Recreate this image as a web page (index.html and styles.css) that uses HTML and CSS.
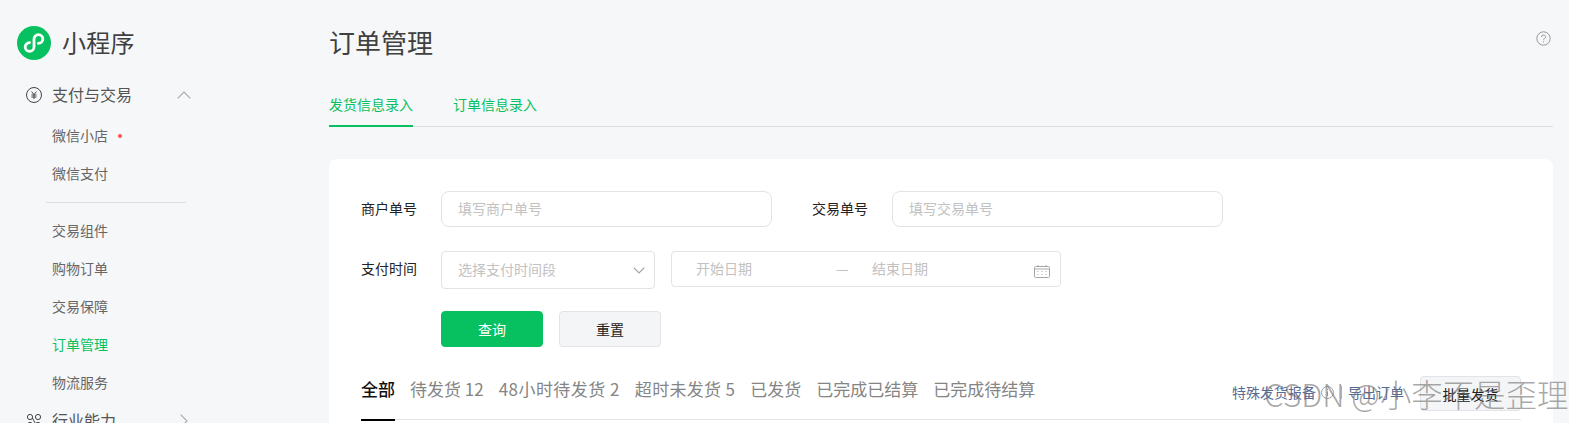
FILE: index.html
```html
<!DOCTYPE html>
<html lang="zh-CN">
<head>
<meta charset="utf-8">
<title>订单管理</title>
<link rel="stylesheet" href="styles.css">
</head>
<body>
<div class="page">
  <aside class="sidebar">
    <div class="brand">
      <svg class="brand-logo" width="34" height="34" viewBox="0 0 34 34"><circle cx="17" cy="17" r="17" fill="#07c160"/><path d="M12.6 16.6A4.4 4.4 0 1 0 17 21V13A4.4 4.4 0 1 1 21.4 17.4" fill="none" stroke="#fff" stroke-width="2.8" stroke-linecap="round"/></svg>
      <span class="brand-name">小程序</span>
    </div>
    <div class="nav-head">
      <svg class="nav-icon" width="16" height="16" viewBox="0 0 16 16" fill="none" stroke="#444" stroke-width="1"><circle cx="8" cy="8" r="7.5"/><path d="M5.6 4.6 8 7.6l2.4-3M5.4 8h5.2M5.4 10h5.2M8 7.6V12"/></svg>
      <span class="nav-title">支付与交易</span>
      <svg class="nav-chevron" width="14" height="8" viewBox="0 0 14 8" fill="none" stroke="#a8a8a8" stroke-width="1.1"><path d="M.7 7.3 7 1l6.3 6.3"/></svg>
    </div>
    <ul class="nav-list first">
      <li class="nav-item">微信小店<span class="dot"></span></li>
      <li class="nav-item">微信支付</li>
    </ul>
    <div class="nav-divider"></div>
    <ul class="nav-list">
      <li class="nav-item">交易组件</li>
      <li class="nav-item">购物订单</li>
      <li class="nav-item">交易保障</li>
      <li class="nav-item active">订单管理</li>
      <li class="nav-item">物流服务</li>
    </ul>
    <div class="nav-head">
      <svg class="nav-icon" width="16" height="16" viewBox="0 0 16 16" fill="none" stroke="#444" stroke-width="1"><circle cx="4" cy="4" r="2.6"/><circle cx="12" cy="4" r="2.6"/><circle cx="4" cy="12" r="2.6"/><circle cx="12" cy="12" r="2.6"/><path d="M6.4 5 9.6 11"/></svg>
      <span class="nav-title">行业能力</span>
      <svg class="nav-chevron right" width="8" height="14" viewBox="0 0 8 14" fill="none" stroke="#a8a8a8" stroke-width="1.1"><path d="M.7.7 7 7 .7 13.3"/></svg>
    </div>
  </aside>
  <main class="main">
    <header class="page-head">
      <h1 class="page-title">订单管理</h1>
      <svg class="help" width="15" height="15" viewBox="0 0 15 15" fill="none" stroke="#999"><circle cx="7.5" cy="7.5" r="6.7"/><path d="M5.5 6a2 2 0 1 1 3 1.7c-.7.4-1 .8-1 1.5"/><path d="M7.5 10.4v1.1"/></svg>
    </header>
    <nav class="top-tabs">
      <a class="top-tab active">发货信息录入</a>
      <a class="top-tab">订单信息录入</a>
    </nav>
    <section class="card">
      <div class="form-row">
        <label class="form-label">商户单号</label>
        <div class="field wide">填写商户单号</div>
        <label class="form-label second">交易单号</label>
        <div class="field wide">填写交易单号</div>
      </div>
      <div class="form-row row-time">
        <label class="form-label">支付时间</label>
        <div class="field select">选择支付时间段
          <svg width="12" height="7" viewBox="0 0 12 7" fill="none" stroke="#a0a0a0" stroke-width="1.1"><path d="M.7.7 6 6 11.3.7"/></svg>
        </div>
        <div class="field date">
          <span class="date-start">开始日期</span>
          <span class="date-sep">—</span>
          <span class="date-end">结束日期</span>
          <svg class="cal" width="16" height="13" viewBox="0 0 16 13" fill="none" stroke="#a8a8a8"><rect x=".5" y="1.5" width="15" height="11" rx="1"/><path d="M.5 4h15M4 0v2M12 0v2"/><path d="M3.5 6.5h1M7.5 6.5h1M11.5 6.5h1M3.5 9.5h1M7.5 9.5h1M11.5 9.5h1"/></svg>
        </div>
      </div>
      <div class="form-actions">
        <button class="btn primary">查询</button>
        <button class="btn">重置</button>
      </div>
      <div class="order-bar">
        <div class="order-tabs">
          <a class="order-tab active">全部</a>
          <a class="order-tab">待发货 12</a>
          <a class="order-tab wider">48小时待发货 2</a>
          <a class="order-tab wide-some">超时未发货 5</a>
          <a class="order-tab">已发货</a>
          <a class="order-tab">已完成已结算</a>
          <a class="order-tab">已完成待结算</a>
        </div>
        <div class="order-tools">
          <a class="tool-link">特殊发货报备</a>
          <svg class="info" width="13" height="13" viewBox="0 0 13 13" fill="none" stroke="#a0a0a0"><circle cx="6.5" cy="6.5" r="6"/><path d="M6.5 3v1M6.5 5.5V10"/></svg>
          <span class="tool-sep"></span>
          <a class="tool-link">导出订单</a>
          <button class="btn batch">批量发货</button>
        </div>
      </div>
    </section>
  </main>
  <div class="watermark">CSDN @小李不是歪理</div>
</div>
</body>
</html>
```
FILE: styles.css
```css
* { box-sizing: border-box; }
html, body { margin: 0; padding: 0; }
body {
  background: #f6f7f9;
  font-family: "Noto Sans CJK SC", "Noto Sans", sans-serif;
  color: #333;
}
.page {
  position: relative;
  display: flex;
  width: 1569px;
  height: 423px;
  overflow: hidden;
}
.sidebar { width: 329px; flex: none; padding-top: 26px; }
.brand { display: flex; align-items: center; height: 34px; padding-left: 17px; margin-bottom: 16px; }
.brand-name { margin-left: 11px; margin-bottom: 2px; font-size: 24px; letter-spacing: .3px; line-height: 32px; color: #404040; }
.nav-head { display: flex; align-items: center; height: 38px; padding-left: 26px; }
.nav-icon { flex: none; }
.nav-title { margin-left: 10px; margin-bottom: 2px; font-size: 16px; color: #555; line-height: 36px; }
.nav-chevron { margin-left: 45px; }
.nav-chevron.right { margin-left: 64px; }
.nav-list { list-style: none; margin: 0; padding: 0; }
.nav-list.first { margin-top: 3px; }
.nav-item { display: flex; align-items: center; height: 38px; padding: 0 0 2px 52px; font-size: 14px; color: #666; }
.nav-item.active { color: #07c160; }
.dot { width: 4px; height: 4px; margin: 2px 0 0 10px; border-radius: 50%; background: #fa5151; }
.nav-divider { width: 140px; height: 1px; margin: 9px 0 9px 46px; background: #dcdee3; }

.main { width: 1224px; flex: none; }
.page-head { display: flex; align-items: center; justify-content: space-between; height: 36px; margin-top: 25px; }
.page-title { margin: 0 0 2px; font-size: 26px; font-weight: 400; line-height: 34px; color: #404040; }
.help { margin-right: 2px; margin-top: -9px; }
.top-tabs { display: flex; gap: 40px; height: 44px; margin-top: 22px; border-bottom: 1px solid #dcdee3; }
.top-tab { display: flex; align-items: center; height: 44px; padding-bottom: 2px; font-size: 14px; color: #07c160; }
.top-tab.active { padding-bottom: 0; border-bottom: 2px solid #07c160; }

.card { margin-top: 32px; padding: 32px 32px 0; height: 300px; background: #fff; border-radius: 8px 8px 0 0; }
.form-row { display: flex; align-items: flex-start; }
.row-time { margin-top: 24px; }
.form-label { width: 80px; flex: none; font-size: 14px; line-height: 34px; color: #222; }
.form-label.second { margin-left: 40px; }
.field {
  display: flex; align-items: center;
  border: 1px solid #e2e3e6; background: #fff;
  font-size: 14px; color: #c2c2c2;
  padding: 0 0 2px 16px;
}
.wide { width: 331px; height: 36px; border-radius: 8px; }
.select { width: 214px; height: 38px; border-radius: 4px; justify-content: space-between; padding-right: 9px; }
.select svg { margin-top: 2px; }
.date { position: relative; width: 390px; height: 36px; margin-left: 16px; border-radius: 4px; padding-left: 24px; }
.date-start { width: 140px; }
.date-sep { width: 36px; }
.date-end { width: 56px; }
.cal { margin-left: auto; margin-right: 10px; margin-top: 6px; }
.form-actions { display: flex; gap: 16px; margin-top: 22px; margin-left: 80px; }
.btn {
  display: block; width: 102px; height: 36px; padding: 0;
  border: 1px solid #e2e3e6; border-radius: 4px; background: #f4f5f7;
  font: 14px "Noto Sans CJK SC", sans-serif; color: #222;
}
.btn.primary { border-color: #07c160; background: #07c160; color: #fff; }
.order-bar { position: relative; display: flex; justify-content: space-between; height: 73px; border-bottom: 1px solid #e4e5e8; }
.order-tabs { display: flex; gap: 15px; padding-top: 29px; }
.order-tab { position: relative; height: 44px; font-size: 17px; line-height: 26px; color: #858585; white-space: nowrap; }
.order-tab.wider { letter-spacing: .45px; }
.order-tab.wide-some { letter-spacing: .3px; }
.order-tab.active { color: #111; font-weight: 500; height: 45px; border-bottom: 2px solid #000; }
.order-tools { display: flex; align-items: center; height: 35px; margin-top: 29px; }
.tool-link { margin-bottom: 4px; font-size: 14px; color: #576b95; }
.info { margin-left: 5px; margin-bottom: 3px; }
.tool-sep { width: 1px; height: 13px; margin: 0 6px 3px 7px; background: #b5bccb; }
.btn.batch { width: 101px; height: 35px; margin-left: 16px; }
.watermark {
  position: absolute; left: 1264px; top: 374px;
  font-size: 31.4px; line-height: 40px; font-weight: 300; white-space: nowrap;
  color: rgba(110, 110, 110, .6);
}
```
